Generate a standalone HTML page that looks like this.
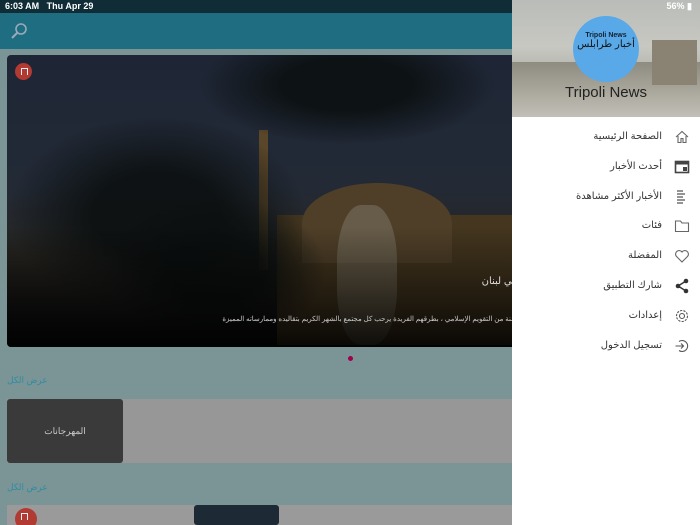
<!DOCTYPE html>
<html><head><meta charset="utf-8"><style>
*{margin:0;padding:0;box-sizing:border-box}
html,body{width:700px;height:525px;overflow:hidden}
body{position:relative;background:#7b9496;font-family:"Liberation Sans","Noto Sans CJK SC",sans-serif}
.status{position:absolute;left:0;top:0;width:700px;height:13px;background:#0f2c37;color:#fff;font-size:9px;font-weight:bold;line-height:13px;padding-left:5px}
.hdr{position:absolute;left:0;top:13px;width:512px;height:36px;background:#1f6d80}
.hero{position:absolute;left:7px;top:55px;width:510px;height:292px;border-radius:4px;overflow:hidden;
background:linear-gradient(180deg,#1e2636 0%,#232a36 45%,#26241f 70%,#0d0d10 100%)}
.dome{position:absolute;left:295px;top:128px;width:150px;height:80px;border-radius:50% 50% 0 0;background:#4f3f28}
.wall{position:absolute;left:270px;top:160px;width:250px;height:130px;background:#44361f}
.min{position:absolute;left:252px;top:75px;width:9px;height:140px;background:#5a4628}
.shade{position:absolute;left:0;bottom:0;width:100%;height:120px;background:linear-gradient(180deg,rgba(0,0,0,0),rgba(0,0,0,.85))}
.palm{position:absolute;border-radius:50%;background:radial-gradient(ellipse,rgba(10,14,14,.85) 30%,rgba(10,14,14,0) 70%)}
.bm{position:absolute;width:17px;height:17px;border-radius:50%;background:#b13a32}
.bm:after{content:"";position:absolute;left:6px;top:5px;width:5px;height:6px;border:1px solid #eee;border-bottom:none}
.cap1{position:absolute;right:0;top:221px;color:#ddd;font-size:10px}
.cap2{position:absolute;right:0;top:260px;color:#ccc;font-size:7px;white-space:nowrap}
.dot{position:absolute;left:348px;top:356px;width:5px;height:5px;border-radius:50%;background:#a0004f}
.all{position:absolute;left:7px;color:#2e8da2;font-size:9px}
.row{position:absolute;left:7px;width:505px;background:#979797}
.drawer{position:absolute;left:512px;top:0;width:188px;height:525px;background:#fff}
.dhead{position:absolute;left:0;top:0;width:188px;height:117px;background:linear-gradient(180deg,#b9bcb8 0%,#c8c8c2 40%,#a6a89f 75%,#b3b3a9 100%)}
.circle{position:absolute;left:61px;top:16px;width:66px;height:66px;border-radius:50%;background:#59a9e8;text-align:center}
.title{position:absolute;left:0;width:188px;top:84px;text-align:center;font-size:15px;color:#222}
.item{position:absolute;right:38px;font-size:10px;color:#333;direction:rtl;font-family:"Liberation Sans","DejaVu Sans",sans-serif}
.ic{position:absolute;left:162px;width:16px;height:16px}
</style></head><body>
<div class="status">6:03 AM&nbsp;&nbsp;&nbsp;Thu Apr 29</div>
<div class="hdr"><svg style="position:absolute;left:10px;top:9px" width="18" height="18" viewBox="0 0 18 18"><circle cx="11" cy="7" r="5" fill="none" stroke="#9ab" stroke-width="1.6"/><path d="M7.5 10.5L2 16" stroke="#9ab" stroke-width="2"/></svg></div>
<div class="hero">
<div class="min"></div><div class="wall"></div><div class="dome"></div>
<div class="palm" style="left:0;top:60px;width:300px;height:200px"></div>
<div class="palm" style="left:190px;top:-30px;width:300px;height:120px"></div>
<div class="palm" style="left:100px;top:140px;width:220px;height:150px"></div>
<div style="position:absolute;left:330px;top:150px;width:60px;height:140px;border-radius:40%;background:rgba(150,145,135,.35)"></div>
<div class="shade"></div>
<div class="bm" style="left:8px;top:8px"></div>
<div class="cap1">في لبنان</div>
<div class="cap2">سنة من التقويم الإسلامي ، بطرقهم الفريدة يرحب كل مجتمع بالشهر الكريم بتقاليده وممارساته المميزة</div>
</div>
<div class="dot"></div>
<div class="all" style="top:375px">عرض الكل</div>
<div class="row" style="top:399px;height:64px"><div style="position:absolute;left:0;top:0;width:116px;height:64px;background:#3a3a3a;border-radius:3px;color:#ccc;font-size:9px;text-align:center;line-height:64px">المهرجانات</div></div>
<div class="all" style="top:482px">عرض الكل</div>
<div class="row" style="top:505px;height:20px;background:#9a9a9a"><div style="position:absolute;left:187px;top:0;width:85px;height:20px;background:#1d2a35;border-radius:3px"></div></div>
<div class="bm" style="left:15px;top:508px;width:22px;height:22px"></div>
<div class="drawer">
<div class="dhead">
<div style="position:absolute;left:0;top:62px;width:188px;height:55px;background:linear-gradient(180deg,#8e8c80,#c2c0b6)"></div>
<div style="position:absolute;left:140px;top:40px;width:45px;height:45px;background:#8a8272"></div>
<div class="circle"><div style="margin-top:16px;font-size:7px;font-weight:bold;color:#123">Tripoli News</div><div style="font-size:10px;color:#111">أخبار طرابلس</div></div>
<div class="title">Tripoli News</div>
</div>
<div class="item" style="top:131px">الصفحة الرئيسية</div>
<div class="item" style="top:161px">أحدث الأخبار</div>
<div class="item" style="top:191px">الأخبار الأكثر مشاهدة</div>
<div class="item" style="top:220px">فئات</div>
<div class="item" style="top:250px">المفضلة</div>
<div class="item" style="top:280px">شارك التطبيق</div>
<div class="item" style="top:310px">إعدادات</div>
<div class="item" style="top:340px">تسجيل الدخول</div>
<svg class="ic" style="top:129px" viewBox="0 0 16 16"><path d="M2 8L8 2.5 14 8M4 7v6.5h3v-4h2v4h3V7" fill="none" stroke="#666" stroke-width="1.1"/></svg>
<svg class="ic" style="top:159px" viewBox="0 0 16 16"><rect x="1.5" y="2.5" width="13" height="11" fill="none" stroke="#444" stroke-width="1.6"/><rect x="1.5" y="2.5" width="13" height="3" fill="#444"/><rect x="9" y="8" width="4" height="4" fill="#444"/></svg>
<svg class="ic" style="top:189px" viewBox="0 0 16 16"><path d="M3 2h6M3 5h8M3 8h6M3 11h8M3 14h6" stroke="#555" stroke-width="1.2"/></svg>
<svg class="ic" style="top:218px" viewBox="0 0 16 16"><path d="M1.5 3h5l1.5 2h6.5v8.5h-13z" fill="none" stroke="#666" stroke-width="1.1"/></svg>
<svg class="ic" style="top:248px" viewBox="0 0 16 16"><path d="M8 14L2.3 8.3A3.3 3.3 0 0 1 8 4a3.3 3.3 0 0 1 5.7 4.3z" fill="none" stroke="#666" stroke-width="1.1"/></svg>
<svg class="ic" style="top:278px" viewBox="0 0 16 16"><circle cx="12" cy="3" r="2.3" fill="#333"/><circle cx="12" cy="13" r="2.3" fill="#333"/><circle cx="4" cy="8" r="2.3" fill="#333"/><path d="M12 3L4 8 12 13" stroke="#333" stroke-width="1.4" fill="none"/></svg>
<svg class="ic" style="top:308px" viewBox="0 0 16 16"><circle cx="8" cy="8" r="2.5" fill="none" stroke="#555" stroke-width="1.1"/><circle cx="8" cy="8" r="5.5" fill="none" stroke="#555" stroke-width="1.1" stroke-dasharray="2.2 1.2"/></svg>
<svg class="ic" style="top:338px" viewBox="0 0 16 16"><path d="M5 3.5A5.5 5.5 0 1 1 5 12.5" fill="none" stroke="#555" stroke-width="1.1"/><path d="M1.5 8h8M7 5.5L9.5 8 7 10.5" fill="none" stroke="#555" stroke-width="1.1"/></svg>
</div>
<div style="position:absolute;right:8px;top:1px;color:#fff;font-size:9px;font-weight:bold">56% ▮</div>
</body></html>
